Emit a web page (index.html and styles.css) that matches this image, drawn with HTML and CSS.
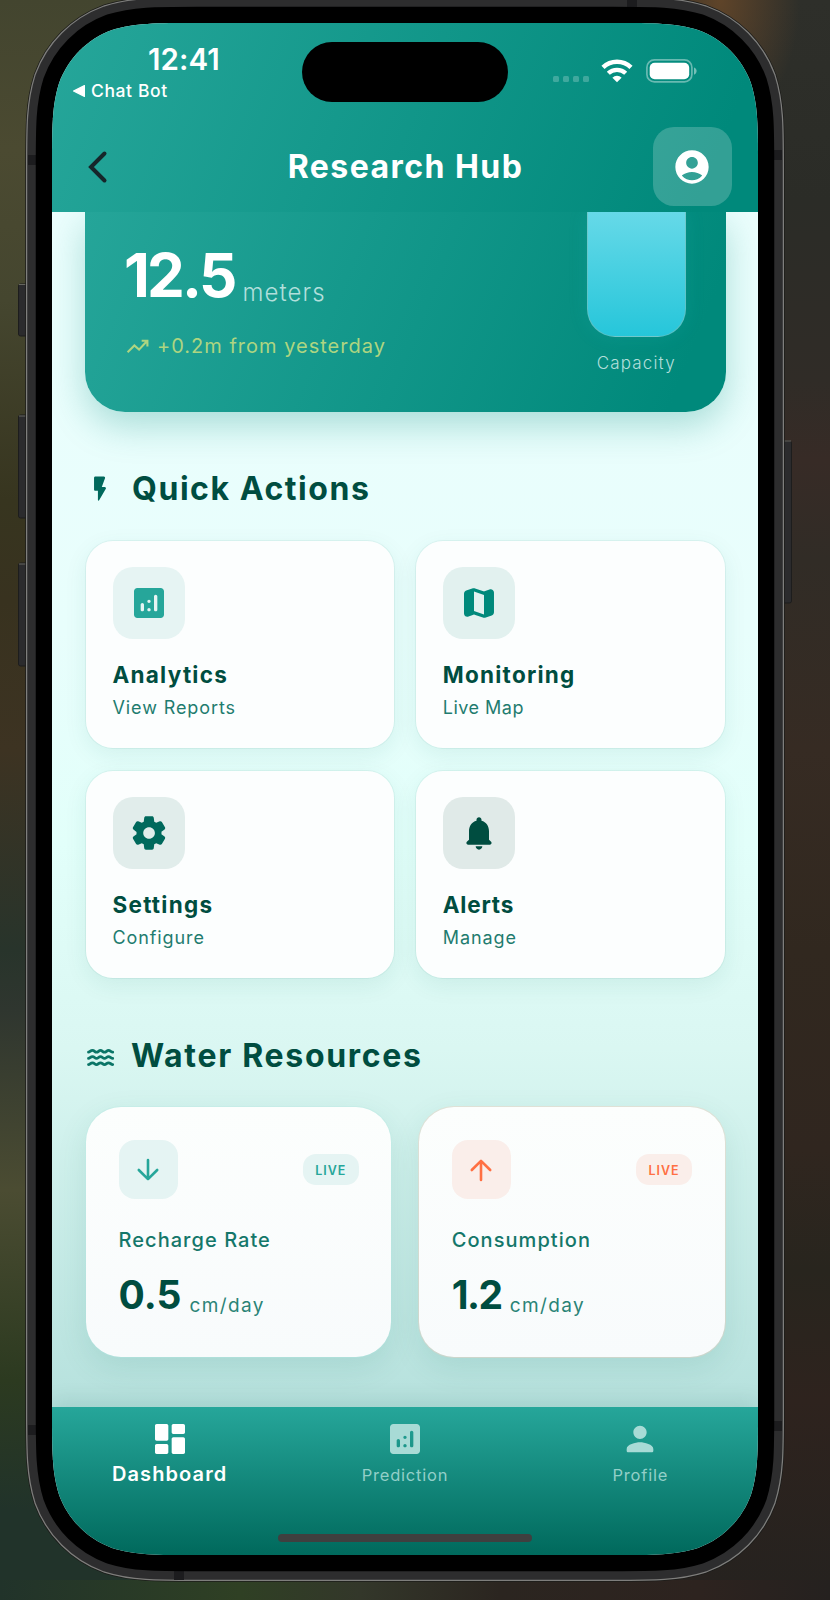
FILE: index.html
```html
<!DOCTYPE html>
<html lang="en">
<head>
<meta charset="utf-8">
<title>Research Hub</title>
<link rel="stylesheet" href="styles.css">
</head>
<body>
<svg width="0" height="0" class="sprite">
  <defs>
    <path id="body-shape" d="M145 0H561C602.6 0 623.5 0 646 7.1C670.6 16.1 689.9 35.4 698.9 60C706 82.5 706 103.4 706 145V1387C706 1428.6 706 1449.5 698.9 1472C689.9 1496.6 670.6 1515.9 646 1524.9C623.5 1532 602.6 1532 561 1532H145C103.4 1532 82.5 1532 60 1524.9C35.4 1515.9 16.1 1496.6 7.1 1472C0 1449.5 0 1428.6 0 1387V145C0 103.4 0 82.5 7.1 60C16.1 35.4 35.4 16.1 60 7.1C82.5 0 103.4 0 145 0Z"/>
    <symbol id="i-analytics" viewBox="0 0 24 24"><path d="M19 3H5c-1.1 0-2 .9-2 2v14c0 1.100.9 2 2 2h14c1.100 0 2-.9 2-2V5c0-1.100-.9-2-2-2zM8 17c-.55 0-1-.45-1-1v-3c0-.55.45-1 1-1s1 .45 1 1v3c0 .55-.45 1-1 1zm4 0c-.55 0-1-.45-1-1s.45-1 1-1 1 .45 1 1-.45 1-1 1zm0-5c-.55 0-1-.45-1-1s.45-1 1-1 1 .45 1 1-.45 1-1 1zm4 5c-.55 0-1-.45-1-1V8c0-.55.45-1 1-1s1 .45 1 1v8c0 .55-.45 1-1 1z"/></symbol>
  </defs>
</svg>
<div class="stage">
  <svg class="frame" width="830" height="1600" viewBox="0 0 830 1600">
    <g fill="#2b2b2d" stroke="#1d1d1d" stroke-width="1">
      <rect x="18.500" y="284" width="12" height="52" rx="2"/>
      <rect x="18.500" y="415" width="12" height="103" rx="2"/>
      <rect x="18.500" y="563" width="12" height="103" rx="2"/>
      <rect x="780" y="441" width="11.500" height="162" rx="2"/>
    </g>
    <path d="M19 284.500h8M19 416h8M19 564h8M783 441h8" stroke="#666660"/>
    <g transform="translate(52 23)">
      <use href="#body-shape" fill="none" stroke="#1c1c1a" stroke-width="53.500"/>
      <use href="#body-shape" fill="none" stroke="#7e7e7c" stroke-width="52"/>
      <use href="#body-shape" fill="none" stroke="#2d2d2e" stroke-width="49.500"/>
    </g>
    <path d="M28 155h8v10h-8zM774 150h8v10h-8zM627 0h10v8h-10zM174 1570h10v10h-10zM28 1425h8v10h-8zM774 1421h8v10h-8z" fill="#1c1c1e"/>
    <use href="#body-shape" transform="translate(52 23)" fill="#000" stroke="#000" stroke-width="32.500"/>
  </svg>
  <div class="screen">
    <header class="top">
      <div class="status">
        <div class="status-left">
          <div class="time">12:41</div>
          <div class="return"><svg width="12" height="12" viewBox="0 0 11 11"><path d="M.5 5.500 10.500.5v10z" fill="#fff" stroke="#fff" stroke-linejoin="round"/></svg><span>Chat Bot</span></div>
        </div>
        <div class="island"></div>
        <div class="status-right">
          <svg width="36" height="6" viewBox="0 0 36 6" fill="#fff" opacity=".22"><rect width="6" height="6" rx="1.500"/><rect x="10" width="6" height="6" rx="1.500"/><rect x="20" width="6" height="6" rx="1.500"/><rect x="30" width="6" height="6" rx="1.500"/></svg>
          <svg class="wifi" width="32" height="24" viewBox="0 0 32 24" fill="none" stroke="#fff"><path d="M2 8.400a20.300 20.300 0 0 1 28 0" stroke-width="4.500"/><path d="M7.300 14.300a12.500 12.500 0 0 1 17.400 0" stroke-width="4.300"/><path d="M16 23.200l-4.600-4.500a6.600 6.600 0 0 1 9.200 0z" fill="#fff" stroke="none"/></svg>
          <svg class="battery" width="51" height="24" viewBox="0 0 51 24"><rect x=".9" y=".9" width="45" height="22" rx="7.500" fill="none" stroke="#fff" stroke-opacity=".4" stroke-width="1.700"/><rect x="3.700" y="3.700" width="39.500" height="16.500" rx="5" fill="#fff"/><path d="M48 8.500c3.500 1.200 3.500 6 0 7.200z" fill="#fff" opacity=".45"/></svg>
        </div>
      </div>
      <div class="appbar">
        <svg class="back" width="22" height="34" viewBox="0 0 22 34"><path d="M18.500 3.500 5 17l13.500 13.500" fill="none" stroke="#16262a" stroke-width="4" stroke-linecap="round" stroke-linejoin="miter"/></svg>
        <h1>Research Hub</h1>
        <div class="account"><svg width="40" height="40" viewBox="0 0 24 24"><path fill="#fff" d="M12 2C6.480 2 2 6.480 2 12s4.480 10 10 10 10-4.480 10-10S17.520 2 12 2zm0 4c1.930 0 3.500 1.570 3.500 3.500S13.930 13 12 13s-3.500-1.570-3.500-3.500S10.070 6 12 6zm0 14c-2.030 0-4.430-.82-6.140-2.880a9.950 9.950 0 0 1 12.280 0C16.430 19.180 14.030 20 12 20z"/></svg></div>
      </div>
    </header>
    <main class="content">
      <section class="hero">
        <div>
          <div class="level"><b>12.5</b><span>meters</span></div>
          <div class="trend"><svg width="25" height="25" viewBox="0 0 24 24"><path d="M2.500 17.500 9 11l4.500 4 7-7.500M16 6.500h5.500V12" fill="none" stroke="currentColor" stroke-width="2"/></svg><span>+0.2m from yesterday</span></div>
        </div>
        <div class="capacity"><div class="tank"></div><span>Capacity</span></div>
      </section>
      <h2><svg width="31" height="31" viewBox="0 0 24 24"><path fill="#00695c" d="M7 3v9c0 .55.45 1 1 1h2v7.150c0 .51.67.69.93.25l5.190-8.900c.39-.67-.09-1.500-.86-1.500H13l2.490-6.650c.25-.65-.23-1.350-.93-1.350H8c-.55 0-1 .45-1 1z"/></svg><span>Quick Actions</span></h2>
      <section class="actions">
        <article class="action">
          <div class="tile t1"><svg width="40" height="40"><use href="#i-analytics"/></svg></div>
          <h3>Analytics</h3><p>View Reports</p>
        </article>
        <article class="action">
          <div class="tile t2"><svg width="40" height="40" viewBox="0 0 24 24"><path fill-rule="evenodd" d="M14.650 4.980 9.650 3.230c-.42-.15-.88-.15-1.300-.01L4.360 4.560C3.550 4.840 3 5.600 3 6.460v11.850c0 1.410 1.410 2.370 2.720 1.860l2.930-1.140c.22-.09.47-.09.69-.01l5 1.750c.42.15.88.15 1.300.01l3.990-1.340c.81-.27 1.360-1.040 1.360-1.900V5.690c0-1.410-1.410-2.370-2.720-1.860l-2.930 1.140c-.22.08-.46.09-.69.01zM15 18.890l-6-2.110V5.110l6 2.110v11.670z"/></svg></div>
          <h3>Monitoring</h3><p class="tight">Live Map</p>
        </article>
        <article class="action">
          <div class="tile t3"><svg width="40" height="40" viewBox="0 0 24 24"><path d="M19.500 12c0-.23-.01-.45-.03-.68l1.860-1.410c.4-.3.510-.86.260-1.300l-1.870-3.230c-.25-.44-.79-.62-1.250-.42l-2.150.91c-.37-.26-.76-.49-1.170-.68l-.29-2.310c-.06-.5-.49-.88-.99-.88h-3.730c-.51 0-.94.38-1 .88l-.29 2.310c-.41.19-.8.42-1.170.68l-2.150-.91c-.46-.2-1-.02-1.250.42L2.410 8.620c-.25.44-.14.990.260 1.300l1.860 1.410a7.300 7.300 0 0 0 0 1.350l-1.860 1.410c-.4.300-.51.860-.26 1.300l1.870 3.230c.25.44.79.620 1.250.42l2.150-.91c.37.26.76.49 1.170.68l.29 2.310c.06.5.49.880.990.880h3.730c.5 0 .93-.38.99-.88l.29-2.310c.41-.19.8-.42 1.170-.68l2.150.91c.46.2 1 .02 1.250-.42l1.870-3.230c.25-.44.14-.990-.26-1.300l-1.860-1.410c.03-.23.04-.45.04-.68zm-7.460 3.500c-1.930 0-3.500-1.570-3.500-3.500s1.570-3.500 3.500-3.500 3.500 1.570 3.500 3.500-1.570 3.500-3.500 3.500z"/></svg></div>
          <h3>Settings</h3><p>Configure</p>
        </article>
        <article class="action">
          <div class="tile t4"><svg width="40" height="40" viewBox="0 0 24 24"><path d="M12 22c1.100 0 2-.9 2-2h-4c0 1.100.9 2 2 2zM18 16v-5c0-3.070-1.630-5.640-4.500-6.320V4c0-.83-.67-1.500-1.500-1.500s-1.500.67-1.500 1.500v.68C7.640 5.360 6 7.920 6 11v5l-1.300 1.290c-.63.630-.19 1.710.7 1.710h13.170c.89 0 1.340-1.080.71-1.710L18 16z"/></svg></div>
          <h3 class="tight">Alerts</h3><p>Manage</p>
        </article>
      </section>
      <h2 class="second"><svg width="30" height="30" viewBox="0 0 30 30" fill="none" stroke="#0b7567" stroke-width="2.800" stroke-linecap="round"><path id="wave" d="M3.500 11.200c1.300 0 2-1.800 4-1.800s2.200 1.800 4 1.800 2.200-1.800 4-1.800 2.200 1.800 4 1.800 2.200-1.800 4-1.800 2.700 1.800 4.200 1.800"/><use href="#wave" y="6.200"/><use href="#wave" y="12.400"/></svg><span>Water Resources</span></h2>
      <section class="resources">
        <article class="resource recharge">
          <div class="row"><div class="arrow"><svg width="24" height="24" viewBox="0 0 24 24"><path d="M12 2v19M2.800 12 12 21.200 21.200 12"/></svg></div><span class="live">LIVE</span></div>
          <h4>Recharge Rate</h4>
          <div class="rate"><b>0.5</b><span>cm/day</span></div>
        </article>
        <article class="resource consumption">
          <div class="row"><div class="arrow"><svg width="24" height="24" viewBox="0 0 24 24"><path d="M12 22V3M2.800 12 12 2.800 21.200 12"/></svg></div><span class="live">LIVE</span></div>
          <h4>Consumption</h4>
          <div class="rate"><b>1.2</b><span>cm/day</span></div>
        </article>
      </section>
    </main>
    <nav class="tabs">
      <div class="tab active"><svg width="40" height="40" viewBox="0 0 24 24"><path d="M4 13h6c.55 0 1-.45 1-1V4c0-.55-.45-1-1-1H4c-.55 0-1 .45-1 1v8c0 .55.45 1 1 1zm0 8h6c.55 0 1-.45 1-1v-4c0-.55-.45-1-1-1H4c-.55 0-1 .45-1 1v4c0 .55.45 1 1 1zm10 0h6c.55 0 1-.45 1-1v-8c0-.55-.45-1-1-1h-6c-.55 0-1 .45-1 1v8c0 .55.45 1 1 1zM13 4v4c0 .55.45 1 1 1h6c.55 0 1-.45 1-1V4c0-.55-.45-1-1-1h-6c-.55 0-1 .45-1 1z"/></svg><span>Dashboard</span></div>
      <div class="tab"><svg width="40" height="40"><use href="#i-analytics"/></svg><span>Prediction</span></div>
      <div class="tab"><svg width="40" height="40" viewBox="0 0 24 24"><path d="M12 12c2.210 0 4-1.790 4-4s-1.790-4-4-4-4 1.790-4 4 1.790 4 4 4zm0 2c-2.670 0-8 1.340-8 4v1c0 .55.45 1 1 1h14c.55 0 1-.45 1-1v-1c0-2.660-5.330-4-8-4z"/></svg><span>Profile</span></div>
      <div class="home"></div>
    </nav>
  </div>
</div>
</body>
</html>
```
FILE: styles.css
```css
* { box-sizing: border-box; }
body { margin: 0; font-family: Inter, "Open Sans", sans-serif; }
h1, h2, h3, h4, p { margin: 0; }
svg { display: block; flex: none; }
.sprite { position: absolute; }

.stage {
  position: relative;
  width: 830px;
  height: 1600px;
  overflow: hidden;
  padding: 23px 72px 0 52px;
  background:
    radial-gradient(ellipse 80px 130px at 720px 0, #5f4429, transparent),
    linear-gradient(90deg, #21332a 0, #2f4024 240px, #33372a 360px, #2b2520 500px, #2d231f 700px, #25211f) 0 1580px / 830px 20px no-repeat,
    linear-gradient(180deg, #43452f 0, #4b4a31 150px, #45462f 300px, #37351f 500px, #38321f 600px, #3d3322 750px, #28342b 950px, #2f362f 1010px, #4b4c32 1190px, #2c3a20 1380px, #21332a 1510px, #21332a) 0 0 / 415px 1600px no-repeat,
    linear-gradient(180deg, #2e2f2a 0, #2b2c27 200px, #302c27 380px, #372b26 460px, #312c26 560px, #362b23 750px, #31281f 950px, #30261f 1150px, #28251e 1270px, #2e231e 1400px, #25221f 1600px);
}
.frame { position: absolute; left: 0; top: 0; }
.screen {
  position: relative;
  width: 706px;
  height: 1532px;
  display: flex;
  flex-direction: column;
  background: #e9fefc;
  clip-path: path("M145 0H561C602.6 0 623.5 0 646 7.1C670.6 16.1 689.9 35.4 698.9 60C706 82.5 706 103.4 706 145V1387C706 1428.6 706 1449.5 698.9 1472C689.9 1496.6 670.6 1515.9 646 1524.9C623.5 1532 602.6 1532 561 1532H145C103.4 1532 82.5 1532 60 1524.9C35.4 1515.9 16.1 1496.6 7.1 1472C0 1449.5 0 1428.6 0 1387V145C0 103.4 0 82.5 7.1 60C16.1 35.4 35.4 16.1 60 7.1C82.5 0 103.4 0 145 0Z");
}

/* header */
.top { height: 189px; color: #fff; background: linear-gradient(112deg, #26a69a, #00897b 92%); }
.status { display: flex; height: 104px; padding-top: 19px; }
.status-left { width: 250px; }
.time { margin: 1px 0 0 96px; font-size: 29.500px; line-height: 32px; font-weight: 600; letter-spacing: .1px; }
.return { display: flex; align-items: center; gap: 6px; margin: 6px 0 0 21px; font-size: 17.500px; line-height: 20px; font-weight: 500; letter-spacing: .6px; }
.island { width: 206px; height: 60px; border-radius: 30px; background: #000; }
.status-right { display: flex; align-items: flex-start; padding: 17px 0 0 45px; }
.status-right svg:first-child { margin-top: 17px; }
.wifi { margin-left: 12px; }
.battery { margin-left: 13px; }
.appbar { display: flex; align-items: center; height: 79px; padding: 0 26px 0 34px; justify-content: space-between; }
.back { margin-right: 50px; }
h1 { font-size: 32px; line-height: 40px; font-weight: 700; letter-spacing: 1.450px; white-space: nowrap; }
.account { display: grid; place-items: center; width: 79px; height: 79px; border-radius: 21px; background: rgba(255, 255, 255, .2); }

/* scroll area */
.content {
  height: 1195px;
  padding: 0 32.500px 0 33px;
  overflow: hidden;
  background: linear-gradient(180deg, #ebfefd 0, #e8fefc 35%, #e2fffa 53%, #daf7f2 70%, #b6e1dd 100%);
}
.hero {
  display: flex;
  justify-content: space-between;
  height: 200px;
  padding: 0 40px 0 39px;
  border-radius: 0 0 40px 40px;
  background: linear-gradient(112deg, #25a599, #00897b 92%);
  box-shadow: 0 14px 36px rgba(0, 137, 123, .28);
}
.level { display: flex; align-items: flex-end; gap: 8px; margin-top: 33px; }
.level b { font-size: 60px; line-height: 60px; font-weight: 700; letter-spacing: -2.800px; color: #fff; }
.level span { font-size: 24px; line-height: 24px; font-weight: 300; letter-spacing: 1.100px; color: #b2dfdb; }
.trend { display: flex; align-items: center; gap: 7px; margin-top: 29px; height: 24px; padding-left: 1px; font-size: 20px; line-height: 24px; letter-spacing: 1px; color: #aed581; }
.capacity { display: flex; flex-direction: column; align-items: center; }
.tank {
  width: 98.500px;
  height: 125px;
  border: 1.500px solid rgba(120, 190, 185, .6);
  border-top: 0;
  border-radius: 0 0 28px 28px;
  background: linear-gradient(180deg, #66d9e8, #26c6da);
  box-shadow: 0 0 20px rgba(38, 198, 218, .12);
}
.capacity span { margin-top: 16px; font-size: 17px; line-height: 20px; font-weight: 300; letter-spacing: 1.150px; color: #b2dfdb; }

h2 { display: flex; align-items: center; gap: 16px; height: 40px; margin: 57px 0 31px; font-size: 32px; line-height: 40px; font-weight: 700; letter-spacing: 1.550px; color: #004d40; }
h2.second { margin: 57px 0 30px; letter-spacing: 1.700px; }

.actions { display: grid; grid-template-columns: 1fr 1fr; gap: 21px 20px; }
.action {
  height: 209px;
  padding: 25.500px 26.500px;
  border: 1.500px solid rgba(0, 105, 92, .06);
  border-radius: 28px;
  background: #fcfefe padding-box;
  box-shadow: 0 7px 22px rgba(0, 105, 92, .08);
}
.tile { display: grid; place-items: center; width: 72px; height: 72px; border-radius: 20px; fill: currentColor; }
.t1 { color: #26a69a; background: #e6f4f3; }
.t2 { color: #00897b; background: #e2f1ef; }
.t3 { color: #00695c; background: #e1edeb; }
.t4 { color: #004d40; background: #e0eae8; }
h3 { margin-top: 21px; font-size: 22.500px; line-height: 30px; font-weight: 700; letter-spacing: 1.250px; color: #004d40; }
h3.tight { letter-spacing: .8px; }
.action p { margin-top: 6px; font-size: 18px; line-height: 24px; letter-spacing: .9px; color: #1f7c6f; }
.action p.tight { letter-spacing: .5px; }

.resources { display: grid; grid-template-columns: 1fr 1fr; gap: 26px; }
.resource {
  height: 252px;
  padding: 33px 32.500px;
  border: 1.500px solid rgba(38, 166, 154, .08);
  border-radius: 36px;
  background: linear-gradient(180deg, #fcfefd, #f8fbfc) padding-box;
  box-shadow: 0 10px 30px rgba(0, 105, 92, .1);
}
.consumption { border-color: rgba(255, 171, 145, .25); }
.row { display: flex; align-items: center; justify-content: space-between; }
.arrow { display: grid; place-items: center; width: 59px; height: 59px; border-radius: 16px; }
.arrow path { fill: none; stroke: currentColor; stroke-width: 2.600; stroke-linecap: round; stroke-linejoin: round; }
.live { width: 56px; height: 31px; border-radius: 13px; text-align: center; font-size: 12.500px; line-height: 33px; font-weight: 600; letter-spacing: .9px; }
.recharge .arrow, .recharge .live { color: #26a69a; background: #e5f4f3; }
.consumption .arrow, .consumption .live { color: #ff7043; background: #faeeea; }
h4 { margin-top: 28px; font-size: 20px; line-height: 26px; font-weight: 500; letter-spacing: 1.050px; color: #14776a; }
.rate { display: flex; align-items: flex-end; gap: 8px; margin-top: 22px; height: 40px; }
.rate b { font-size: 39px; line-height: 40px; font-weight: 700; color: #004d40; }
.consumption .rate b { letter-spacing: -1.500px; }
.rate span { margin-bottom: -1px; font-size: 19px; line-height: 20px; letter-spacing: 1.400px; color: #2a8376; }

/* tab bar */
.tabs {
  position: relative;
  display: grid;
  grid-template-columns: repeat(3, 1fr);
  height: 148px;
  padding-top: 12px;
  background: linear-gradient(180deg, #26a69a, #00695c);
  box-shadow: 0 -5px 20px rgba(0, 77, 64, .12);
}
.tab { display: flex; flex-direction: column; align-items: center; gap: 4px; fill: #a8dbd6; color: #92cfc8; font-size: 16.500px; line-height: 24px; letter-spacing: .8px; }
.tab.active { gap: 3px; fill: #fff; color: #fff; font-size: 20px; font-weight: 600; letter-spacing: 1.100px; }
.home { position: absolute; left: 226px; bottom: 13px; width: 254px; height: 8px; border-radius: 4px; background: #3f3f3f; }
```
